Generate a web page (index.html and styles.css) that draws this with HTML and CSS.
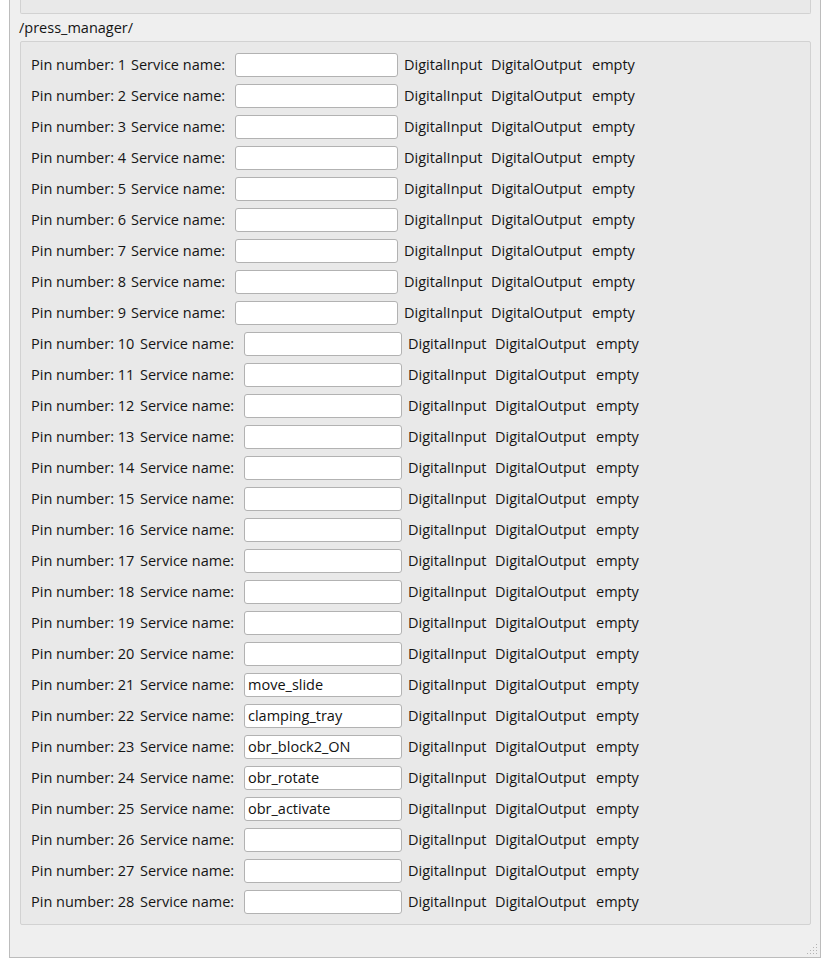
FILE: index.html
```html
<!DOCTYPE html>
<html>
<head>
<meta charset="utf-8">
<link rel="stylesheet" href="styles.css">
</head>
<body>
<div class="window">
  <div class="prev-box"></div>
  <div class="group-title">/press_manager/</div>
  <div class="group">
    <div class="row"><span class="pin">Pin number: 1</span><span class="svc">Service name:</span><input class="field" type="text" value=""><span class="t-in">DigitalInput</span><span class="t-out">DigitalOutput</span><span class="t-empty">empty</span></div>
    <div class="row"><span class="pin">Pin number: 2</span><span class="svc">Service name:</span><input class="field" type="text" value=""><span class="t-in">DigitalInput</span><span class="t-out">DigitalOutput</span><span class="t-empty">empty</span></div>
    <div class="row"><span class="pin">Pin number: 3</span><span class="svc">Service name:</span><input class="field" type="text" value=""><span class="t-in">DigitalInput</span><span class="t-out">DigitalOutput</span><span class="t-empty">empty</span></div>
    <div class="row"><span class="pin">Pin number: 4</span><span class="svc">Service name:</span><input class="field" type="text" value=""><span class="t-in">DigitalInput</span><span class="t-out">DigitalOutput</span><span class="t-empty">empty</span></div>
    <div class="row"><span class="pin">Pin number: 5</span><span class="svc">Service name:</span><input class="field" type="text" value=""><span class="t-in">DigitalInput</span><span class="t-out">DigitalOutput</span><span class="t-empty">empty</span></div>
    <div class="row"><span class="pin">Pin number: 6</span><span class="svc">Service name:</span><input class="field" type="text" value=""><span class="t-in">DigitalInput</span><span class="t-out">DigitalOutput</span><span class="t-empty">empty</span></div>
    <div class="row"><span class="pin">Pin number: 7</span><span class="svc">Service name:</span><input class="field" type="text" value=""><span class="t-in">DigitalInput</span><span class="t-out">DigitalOutput</span><span class="t-empty">empty</span></div>
    <div class="row"><span class="pin">Pin number: 8</span><span class="svc">Service name:</span><input class="field" type="text" value=""><span class="t-in">DigitalInput</span><span class="t-out">DigitalOutput</span><span class="t-empty">empty</span></div>
    <div class="row"><span class="pin">Pin number: 9</span><span class="svc">Service name:</span><input class="field" type="text" value=""><span class="t-in">DigitalInput</span><span class="t-out">DigitalOutput</span><span class="t-empty">empty</span></div>
    <div class="row wide"><span class="pin">Pin number: 10</span><span class="svc">Service name:</span><input class="field" type="text" value=""><span class="t-in">DigitalInput</span><span class="t-out">DigitalOutput</span><span class="t-empty">empty</span></div>
    <div class="row wide"><span class="pin">Pin number: 11</span><span class="svc">Service name:</span><input class="field" type="text" value=""><span class="t-in">DigitalInput</span><span class="t-out">DigitalOutput</span><span class="t-empty">empty</span></div>
    <div class="row wide"><span class="pin">Pin number: 12</span><span class="svc">Service name:</span><input class="field" type="text" value=""><span class="t-in">DigitalInput</span><span class="t-out">DigitalOutput</span><span class="t-empty">empty</span></div>
    <div class="row wide"><span class="pin">Pin number: 13</span><span class="svc">Service name:</span><input class="field" type="text" value=""><span class="t-in">DigitalInput</span><span class="t-out">DigitalOutput</span><span class="t-empty">empty</span></div>
    <div class="row wide"><span class="pin">Pin number: 14</span><span class="svc">Service name:</span><input class="field" type="text" value=""><span class="t-in">DigitalInput</span><span class="t-out">DigitalOutput</span><span class="t-empty">empty</span></div>
    <div class="row wide"><span class="pin">Pin number: 15</span><span class="svc">Service name:</span><input class="field" type="text" value=""><span class="t-in">DigitalInput</span><span class="t-out">DigitalOutput</span><span class="t-empty">empty</span></div>
    <div class="row wide"><span class="pin">Pin number: 16</span><span class="svc">Service name:</span><input class="field" type="text" value=""><span class="t-in">DigitalInput</span><span class="t-out">DigitalOutput</span><span class="t-empty">empty</span></div>
    <div class="row wide"><span class="pin">Pin number: 17</span><span class="svc">Service name:</span><input class="field" type="text" value=""><span class="t-in">DigitalInput</span><span class="t-out">DigitalOutput</span><span class="t-empty">empty</span></div>
    <div class="row wide"><span class="pin">Pin number: 18</span><span class="svc">Service name:</span><input class="field" type="text" value=""><span class="t-in">DigitalInput</span><span class="t-out">DigitalOutput</span><span class="t-empty">empty</span></div>
    <div class="row wide"><span class="pin">Pin number: 19</span><span class="svc">Service name:</span><input class="field" type="text" value=""><span class="t-in">DigitalInput</span><span class="t-out">DigitalOutput</span><span class="t-empty">empty</span></div>
    <div class="row wide"><span class="pin">Pin number: 20</span><span class="svc">Service name:</span><input class="field" type="text" value=""><span class="t-in">DigitalInput</span><span class="t-out">DigitalOutput</span><span class="t-empty">empty</span></div>
    <div class="row wide"><span class="pin">Pin number: 21</span><span class="svc">Service name:</span><input class="field" type="text" value="move_slide"><span class="t-in">DigitalInput</span><span class="t-out">DigitalOutput</span><span class="t-empty">empty</span></div>
    <div class="row wide"><span class="pin">Pin number: 22</span><span class="svc">Service name:</span><input class="field" type="text" value="clamping_tray"><span class="t-in">DigitalInput</span><span class="t-out">DigitalOutput</span><span class="t-empty">empty</span></div>
    <div class="row wide"><span class="pin">Pin number: 23</span><span class="svc">Service name:</span><input class="field" type="text" value="obr_block2_ON"><span class="t-in">DigitalInput</span><span class="t-out">DigitalOutput</span><span class="t-empty">empty</span></div>
    <div class="row wide"><span class="pin">Pin number: 24</span><span class="svc">Service name:</span><input class="field" type="text" value="obr_rotate"><span class="t-in">DigitalInput</span><span class="t-out">DigitalOutput</span><span class="t-empty">empty</span></div>
    <div class="row wide"><span class="pin">Pin number: 25</span><span class="svc">Service name:</span><input class="field" type="text" value="obr_activate"><span class="t-in">DigitalInput</span><span class="t-out">DigitalOutput</span><span class="t-empty">empty</span></div>
    <div class="row wide"><span class="pin">Pin number: 26</span><span class="svc">Service name:</span><input class="field" type="text" value=""><span class="t-in">DigitalInput</span><span class="t-out">DigitalOutput</span><span class="t-empty">empty</span></div>
    <div class="row wide"><span class="pin">Pin number: 27</span><span class="svc">Service name:</span><input class="field" type="text" value=""><span class="t-in">DigitalInput</span><span class="t-out">DigitalOutput</span><span class="t-empty">empty</span></div>
    <div class="row wide"><span class="pin">Pin number: 28</span><span class="svc">Service name:</span><input class="field" type="text" value=""><span class="t-in">DigitalInput</span><span class="t-out">DigitalOutput</span><span class="t-empty">empty</span></div>
  </div>
  <svg class="grip" width="11" height="11" viewBox="0 0 11 11">
    <g fill="#b3b3b3">
      <rect x="9" y="0" width="1" height="1"/>
      <rect x="6" y="3" width="1" height="1"/><rect x="9" y="3" width="1" height="1"/>
      <rect x="3" y="6" width="1" height="1"/><rect x="6" y="6" width="1" height="1"/><rect x="9" y="6" width="1" height="1"/>
      <rect x="0" y="9" width="1" height="1"/><rect x="3" y="9" width="1" height="1"/><rect x="6" y="9" width="1" height="1"/><rect x="9" y="9" width="1" height="1"/>
    </g>
  </svg>
</div>
</body>
</html>
```

FILE: styles.css
```css
* { box-sizing: border-box; }

html, body {
  margin: 0;
  padding: 0;
  background: #ffffff;
}

body {
  font-family: "Open Sans", "Noto Sans", "DejaVu Sans", sans-serif;
  font-size: 14.5px;
  color: #151515;
}

.window {
  position: relative;
  margin-left: 9px;
  width: 812px;
  height: 958px;
  background: #efefef;
  border: 1px solid #bcbcbc;
  border-top: none;
  padding: 0 9px 0 10px;
}

.prev-box {
  width: 791px;
  height: 14px;
  background: #e9e9e9;
  border: 1px solid #d2d2d2;
  border-top: none;
  border-radius: 0 0 2px 2px;
}

.group-title {
  height: 27px;
  display: flex;
  align-items: center;
  margin-left: -1px;
  padding-top: 0;
}

.group {
  width: 791px;
  background: #e9e9e9;
  border: 1px solid #d2d2d2;
  border-radius: 2px;
  padding: 7px 0 7px 10px;
}

.row {
  display: flex;
  align-items: center;
  height: 31px;
  white-space: nowrap;
}

.pin { width: 100px; }
.row.wide .pin { width: 109px; }

.svc { width: 104px; }

.field {
  width: 163px;
  height: 24px;
  margin: 0 6px 0 0;
  padding: 0 3px;
  font: inherit;
  color: #111;
  background: #ffffff;
  border: 1px solid #b2b2b2;
  border-radius: 3px;
  outline: none;
}
.row.wide .field { width: 158px; }

.t-in { width: 87px; }
.t-out { width: 101px; }
.t-empty { width: auto; }

.grip {
  position: absolute;
  right: 2px;
  bottom: 2px;
}
```
